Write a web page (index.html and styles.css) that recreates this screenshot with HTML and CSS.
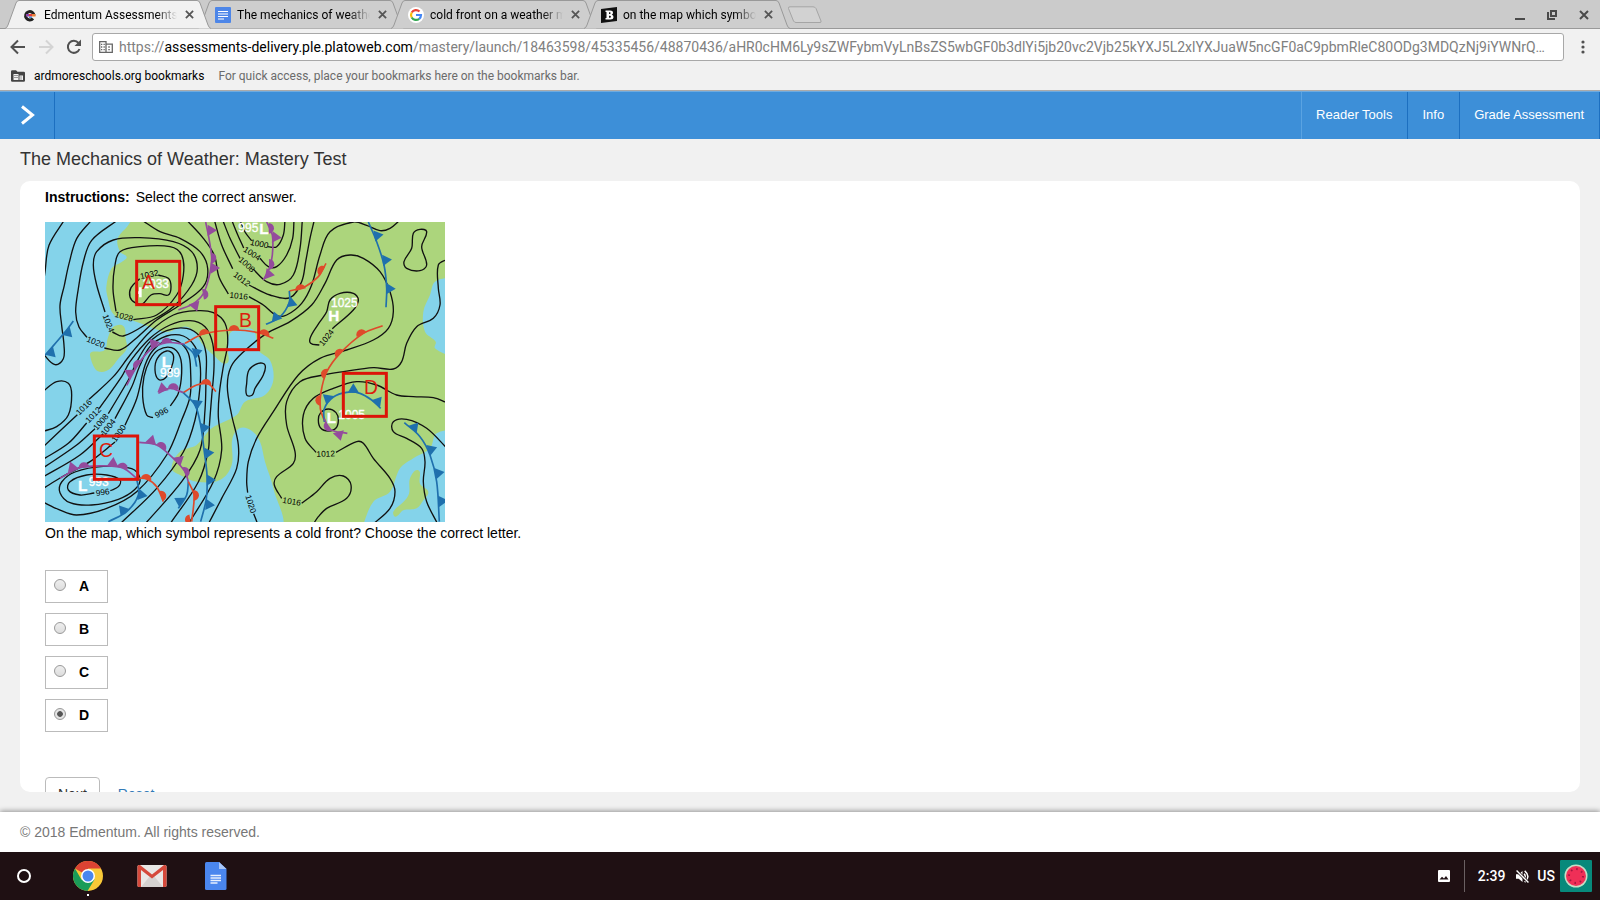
FILE: index.html
```html
<!DOCTYPE html>
<html lang="en">
<head>
  <meta charset="UTF-8" />
  <meta name="viewport" content="width=device-width, initial-scale=1.0"/>
  <title>Edmentum Assessments</title>
  <link rel="stylesheet" href="styles.css">
</head>
<body>
  <!-- Tab strip -->
  <div class="tab-strip">
    <div class="tab active">
      <svg class="tab-shape" viewBox="0 0 206 29"><path d="M0 28.5Q2 28 3 25L11 3Q12 .5 14 .5H192Q194 .5 195 3L203 25Q204 28 206 28.5"/></svg>
      <svg class="favicon" viewBox="0 0 16 16"><path d="M12 8.500A4.200 4.200 0 1 0 11 11.500" fill="none" stroke="#222" stroke-width="3"/><path d="M4 7h3v2.500H4z" fill="#8e44ad"/><path d="M7 7h3v2.500H7z" fill="#e23b3b"/><path d="M10 7h3.500v2.500H10z" fill="#e9803a"/><path d="M7 9.500h3v1.500H7z" fill="#4a90d9"/></svg>
      <span class="tab-title">Edmentum Assessments</span>
      <button class="tab-close" aria-label="Close tab"><svg viewBox="0 0 10 10"><path d="M1 1l8 8M9 1l-8 8"/></svg></button>
    </div>
    <div class="tab">
      <svg class="tab-shape" viewBox="0 0 206 29"><path d="M0 28.5Q2 28 3 25L11 3Q12 .5 14 .5H192Q194 .5 195 3L203 25Q204 28 206 28.5"/></svg>
      <svg class="favicon" viewBox="0 0 16 16"><rect width="16" height="16" rx="1" fill="#4d86e8"/><path d="M3 4.500h10M3 7h10M3 9.500h10M3 12h6" stroke="#fff" stroke-width="1.200"/></svg>
      <span class="tab-title">The mechanics of weather</span>
      <button class="tab-close" aria-label="Close tab"><svg viewBox="0 0 10 10"><path d="M1 1l8 8M9 1l-8 8"/></svg></button>
    </div>
    <div class="tab">
      <svg class="tab-shape" viewBox="0 0 206 29"><path d="M0 28.5Q2 28 3 25L11 3Q12 .5 14 .5H192Q194 .5 195 3L203 25Q204 28 206 28.5"/></svg>
      <svg class="favicon" viewBox="0 0 16 16"><circle cx="8" cy="8" r="8" fill="#fff"/><g fill="none" stroke-width="2.200"><path d="M11.500 4.500A5 5 0 0 0 3.700 5.500" stroke="#ea4335"/><path d="M3.700 5.500A5 5 0 0 0 3.700 10.500" stroke="#fbbc05"/><path d="M3.700 10.500A5 5 0 0 0 11.200 11.800" stroke="#34a853"/><path d="M11.200 11.800A5 5 0 0 0 13 8H8" stroke="#4285f4"/></g></svg>
      <span class="tab-title">cold front on a weather map</span>
      <button class="tab-close" aria-label="Close tab"><svg viewBox="0 0 10 10"><path d="M1 1l8 8M9 1l-8 8"/></svg></button>
    </div>
    <div class="tab">
      <svg class="tab-shape" viewBox="0 0 206 29"><path d="M0 28.5Q2 28 3 25L11 3Q12 .5 14 .5H192Q194 .5 195 3L203 25Q204 28 206 28.5"/></svg>
      <svg class="favicon" viewBox="0 0 16 16"><path d="M0 2L16 0V14L0 16Z" fill="#111"/><path d="M4.500 3.500h4.500q3 0 3 2.300 0 1.500-1.300 2 1.800.4 1.800 2.200 0 2.500-3.200 2.500H4.500v-1.500h1V5h-1zM8 5.200v1.800h.8q.8 0 .8-.9t-.8-.9zM8 8.800v2h1q.9 0 .9-1t-.9-1z" fill="#fff" fill-rule="evenodd"/></svg>
      <span class="tab-title">on the map which symbol</span>
      <button class="tab-close" aria-label="Close tab"><svg viewBox="0 0 10 10"><path d="M1 1l8 8M9 1l-8 8"/></svg></button>
    </div>
    <button class="new-tab" aria-label="New tab"><svg viewBox="0 0 36 18"><path d="M1.500 2.500Q1 .8 3 .8H26Q28 .8 29 2.500L34 15Q34.500 16.500 33 16.500H9Q7.500 16.500 6.500 15Z"/></svg></button>
    <div class="window-buttons">
      <button aria-label="Minimize"><svg viewBox="0 0 12 12"><path d="M1 10h10"/></svg></button>
      <button aria-label="Restore"><svg viewBox="0 0 12 12"><path d="M5 2h5v5H5zM2 3v7h7"/></svg></button>
      <button aria-label="Close"><svg viewBox="0 0 12 12"><path d="M2 2l8 8M10 2l-8 8"/></svg></button>
    </div>
  </div>

  <!-- Toolbar -->
  <div class="toolbar">
    <button class="nav-button" aria-label="Back"><svg viewBox="0 0 16 16"><path d="M15 8H2M8 1.500L1.500 8L8 14.500"/></svg></button>
    <button class="nav-button disabled" aria-label="Forward"><svg viewBox="0 0 16 16"><path d="M1 8H14M8 1.500L14.500 8L8 14.500"/></svg></button>
    <button class="nav-button" aria-label="Reload"><svg viewBox="0 0 16 16"><path d="M13.500 10A6 6 0 1 1 12.500 4"/><path d="M15 .5V7H8.500Z" class="solid"/></svg></button>
    <label class="omnibox">
      <svg viewBox="0 0 14 12"><path d="M.7.7h6.300v10.600H.7zM7 3.200h6.300v8.100H7M2 3.300h1.300M4.500 3.300h1.300M2 6h1.300M4.500 6h1.300M2 8.700h1.300M4.500 8.700h1.300M9.300 6h1.500M9.300 8.700h1.500"/></svg>
      <span>https://</span><b>assessments-delivery.ple.platoweb.com</b>
      <input type="text" aria-label="Address" value="/mastery/launch/18463598/45335456/48870436/aHR0cHM6Ly9sZWFybmVyLnBsZS5wbGF0b3dlYi5jb20vc2Vjb25kYXJ5L2xlYXJuaW5ncGF0aC9pbmRleC80ODg3MDQzNj9iYWNrQ…" />
    </label>
    <button class="menu-button" aria-label="Menu"><svg viewBox="0 0 4 14"><circle cx="2" cy="2" r="1.600"/><circle cx="2" cy="7" r="1.600"/><circle cx="2" cy="12" r="1.600"/></svg></button>
  </div>

  <div class="bookmarks">
    <svg viewBox="0 0 14 12"><path d="M0 1.500Q0 .3 1.200.3H5L6.500 1.800H12.800Q14 1.800 14 3V10.500Q14 11.700 12.800 11.700H1.200Q0 11.700 0 10.500Z" fill="#444"/><path d="M2.500 4h5v6h-5zM8.500 5.500h3.500v4.500H8.500z" fill="#f1f1f1"/><path d="M4 5v4M6 5v4M10 6.500v3" stroke="#444" stroke-dasharray="1 1"/></svg>
    <a href="#">ardmoreschools.org bookmarks</a>
    <span>For quick access, place your bookmarks here on the bookmarks bar.</span>
  </div>

  <!-- Assessment header -->
  <header class="app-bar">
    <button class="expand" aria-label="Open menu"><svg viewBox="0 0 14 20"><path d="M1 1.500L11.500 10L1 18.500"/></svg></button>
    <nav>
      <a href="#">Reader Tools</a>
      <a href="#">Info</a>
      <a href="#">Grade Assessment</a>
    </nav>
  </header>

  <main>
    <h1>The Mechanics of Weather: Mastery Test</h1>
    <form class="card">
      <p class="instructions"><b>Instructions:</b> Select the correct answer.</p>
      <svg class="map" viewBox="0 0 1200 900" role="img" aria-label="Weather map">
        <rect width="1200" height="900" fill="#acd57c"/>
        <g id="water" fill="#84d3ea"></g>
        <g id="islands" fill="#acd57c"></g>
        <g id="isobars" fill="none" stroke="#111" stroke-width="4"></g>
        <g id="fronts"></g>
        <g id="pressures" class="pressures"></g>
        <g class="centers">
          <text x="580" y="29">995</text><text x="643" y="37" class="mark">L</text>
          <text x="292" y="198">1033</text><path d="M286 196V226M274 212H286" stroke="#fff" stroke-width="8"/>
          <text x="858" y="254">1025</text><text x="850" y="297" class="mark">H</text>
          <text x="350" y="434" class="mark">L</text><text x="345" y="465">989</text>
          <text x="99" y="807" class="mark">L</text><text x="131" y="792">993</text>
          <text x="845" y="604" class="mark">L</text><text x="880" y="592">1005</text>
        </g>
        <g class="choices-on-map">
          <rect x="275" y="118" width="129" height="130"/><text x="291" y="201">A</text>
          <rect x="512" y="254" width="129" height="129"/><text x="582" y="314">B</text>
          <rect x="148" y="642" width="130" height="130"/><text x="162" y="704">C</text>
          <rect x="895" y="454" width="129" height="129"/><text x="957" y="515">D</text>
        </g>
      </svg>
      <p class="question">On the map, which symbol represents a cold front? Choose the correct letter.</p>
      <div class="options">
        <label><input type="radio" name="answer" value="A" /> A</label>
        <label><input type="radio" name="answer" value="B" /> B</label>
        <label><input type="radio" name="answer" value="C" /> C</label>
        <label><input type="radio" name="answer" value="D" checked /> D</label>
      </div>
      <div class="actions">
        <button type="button">Next</button>
        <a href="#">Reset</a>
      </div>
    </form>
  </main>

  <footer>© 2018 Edmentum. All rights reserved.</footer>

  <!-- Shelf -->
  <div class="shelf">
    <button class="launcher" aria-label="Launcher"></button>
    <button class="app running" aria-label="Chrome"><svg viewBox="0 0 30 30"><circle cx="15" cy="15" r="15" fill="#f9c938"/><path d="M15 15L2 7.500A15 15 0 0 1 28 7.500H15Z" fill="#dc4333"/><path d="M2 7.500A15 15 0 0 0 14.500 30L21.500 18.500L15 15L8.500 18.800Z" fill="#1a9c58"/><circle cx="15" cy="15" r="7" fill="#fff"/><circle cx="15" cy="15" r="5.500" fill="#4a86ee"/></svg></button>
    <button class="app" aria-label="Gmail"><svg viewBox="0 0 30 30"><rect x="0.500" y="4" width="29" height="22" rx="1.500" fill="#e9e7e5"/><path d="M4 26L13 15L15 17L17 15L26 26Z" fill="#d5d2d0"/><path d="M0.500 5.500Q.5 4 2 4H3L15 13.500L27 4H28Q29.500 4 29.500 5.500V24.500Q29.500 26 28 26H26V9L15 17.500L4 9V26H2Q.5 26 .5 24.500Z" fill="#d5493b"/></svg></button>
    <button class="app" aria-label="Docs"><svg viewBox="0 0 30 30"><path d="M4 2.500Q4 1 5.500 1H18L25.500 8V27.500Q25.500 29 24 29H5.500Q4 29 4 27.500Z" fill="#4a86ee"/><path d="M18 1L25.500 8H18Z" fill="#a9c6f8"/><path d="M9.500 14.500h10.500M9.500 17h10.500M9.500 19.500h10.500M9.500 22h7" stroke="#e8f0fe" stroke-width="1.300"/></svg></button>
    <div class="tray">
      <svg class="picture" viewBox="0 0 12 12"><path d="M1 0H11Q12 0 12 1V11Q12 12 11 12H1Q0 12 0 11V1Q0 0 1 0ZM1.500 9.500H10.500L8 6L6 8.500L4 6.800Z" fill="#fff" fill-rule="evenodd"/></svg>
      <span class="divider"></span>
      <span>2:39</span>
      <svg class="muted" viewBox="0 0 12 12"><path d="M0 4H2.500L6 1V11L2.500 8H0Z" fill="#fff"/><path d="M7.500 3.500Q9.500 6 7.500 8.500M8 .8Q14 6 8 11.200" fill="none" stroke="#fff" stroke-width="1.400"/><path d="M.5.5L11.500 11.500" stroke="#1f1013" stroke-width="2.600"/><path d="M.5.5L11.500 11.500" stroke="#fff" stroke-width="1.300"/></svg>
      <span>US</span>
      <svg class="avatar" viewBox="0 0 32 32"><rect width="32" height="32" rx="1" fill="#07897b"/><circle cx="16" cy="16" r="11.500" fill="#c4dfc6"/><circle cx="16" cy="16" r="10" fill="#ef2f57"/><circle cx="16" cy="16" r="7" fill="none" stroke="#a01840" stroke-width="2" stroke-dasharray="1.500 4"/></svg>
    </div>
  </div>
  <script src="map.js"></script>
</body>
</html>
```

FILE: styles.css
```css
:root {
  --chrome: #f1f1f1;
  --blue: #3d8fd8;
  --line: #bbb;
}

* {
  box-sizing: border-box;
}

body {
  margin: 0;
  height: 100vh;
  display: flex;
  flex-direction: column;
  overflow: hidden;
  background: #f1f1f1;
  color: #000;
  font-family: "Liberation Sans", Arial, sans-serif;
  font-size: 14px;
}

button {
  padding: 0;
  border: none;
  background: none;
  font: inherit;
}

svg {
  display: block;
  flex: none;
}

p, h1 {
  margin: 0;
}

/* tab strip */
.tab-strip {
  display: flex;
  align-items: center;
  height: 29px;
  padding-left: 5px;
  background: #cbcbcb;
  box-shadow: inset 0 -1px #999;
  font-family: Roboto, sans-serif;
  font-size: 12px;
}

.tab {
  position: relative;
  display: flex;
  align-items: center;
  width: 206px;
  height: 29px;
  margin-right: -13px;
  padding: 0 17px 0 17px;
}

.tab.active {
  z-index: 1;
}

.tab-shape {
  position: absolute;
  inset: 0;
  fill: #cecece;
  stroke: #999;
}

.tab.active .tab-shape {
  fill: var(--chrome);
}

.favicon {
  position: relative;
  width: 16px;
  height: 16px;
}

.tab-title {
  position: relative;
  flex: 1;
  margin: 0 8px 0 6px;
  overflow: hidden;
  white-space: nowrap;
  mask-image: linear-gradient(to right, #000 84%, transparent);
}

.tab-close svg {
  position: relative;
  width: 9px;
  height: 9px;
  stroke: #555;
  stroke-width: 2;
}

.new-tab {
  margin-left: 10px;
}

.new-tab svg {
  width: 36px;
  height: 18px;
  fill: #d2d2d2;
  stroke: #a5a5a5;
}

.window-buttons {
  display: flex;
  gap: 20px;
  margin-left: auto;
  padding-right: 10px;
}

.window-buttons svg {
  width: 12px;
  height: 12px;
  fill: none;
  stroke: #4a4a4a;
  stroke-width: 2;
}

/* toolbar */
.toolbar {
  display: flex;
  align-items: center;
  height: 36px;
  padding: 0 15px 0 10px;
  background: var(--chrome);
  font-family: Roboto, sans-serif;
  font-size: 14px;
}

.nav-button {
  margin-right: 12px;
}

.nav-button svg {
  width: 16px;
  height: 16px;
  fill: none;
  stroke: #505050;
  stroke-width: 2;
}

.nav-button .solid {
  fill: #505050;
  stroke: none;
}

.nav-button.disabled svg {
  stroke: #d4d4d4;
}

.omnibox {
  flex: 1;
  display: flex;
  align-items: center;
  height: 28px;
  margin-left: -2px;
  padding: 0 6px;
  border: 1px solid #a8a8a8;
  border-radius: 3px;
  background: #fff;
  color: #808080;
}

.omnibox svg {
  width: 14px;
  height: 12px;
  margin-right: 6px;
  fill: none;
  stroke: #666;
  stroke-width: 1.3;
}

.omnibox b {
  color: #000;
  font-weight: normal;
}

.omnibox input {
  flex: 1;
  min-width: 0;
  padding: 0;
  border: none;
  outline: none;
  background: none;
  color: inherit;
  font: inherit;
}

.menu-button {
  margin-left: 17px;
}

.menu-button svg {
  width: 4px;
  height: 14px;
  fill: #505050;
}

.bookmarks {
  display: flex;
  align-items: center;
  height: 26px;
  padding: 0 11px 4px;
  background: var(--chrome);
  border-bottom: 1px solid #aaa;
  color: #6b6b6b;
  font-family: Roboto, sans-serif;
  font-size: 12px;
}

.bookmarks svg {
  width: 14px;
  height: 12px;
}

.bookmarks a {
  margin: 0 14px 0 9px;
  color: #000;
  text-decoration: none;
}

/* assessment header */
.app-bar {
  display: flex;
  justify-content: space-between;
  height: 48px;
  background: var(--blue);
  border-top: 1px solid #6eabe0;
}

.expand {
  width: 55px;
  padding: 0 0 2px 2px;
  border-right: 1px solid #1c6fc0;
}

.expand svg {
  width: 14px;
  height: 20px;
  margin: 0 auto;
  fill: none;
  stroke: #fff;
  stroke-width: 3;
}

.app-bar nav {
  display: flex;
  border-left: 1px solid #5aa3e2;
}

.app-bar a {
  display: flex;
  align-items: center;
  padding: 0 15px 2px 14px;
  border-right: 1px solid #1c6fc0;
  color: #fff;
  font-size: 13px;
  text-decoration: none;
}

/* content */
main {
  flex: 1;
  min-height: 0;
  display: flex;
  flex-direction: column;
  padding: 0 20px 20px;
}

h1 {
  padding: 10px 0 11px;
  color: #333;
  font-size: 18px;
  font-weight: normal;
  line-height: 21px;
}

.card {
  flex: 1;
  min-height: 0;
  overflow: hidden;
  padding: 7px 25px 0;
  border-radius: 10px;
  background: #fff;
}

.instructions {
  margin-bottom: 16px;
  line-height: 18px;
}

.instructions b {
  margin-right: 2px;
}

.map {
  width: 400px;
  height: 300px;
}

.question {
  margin: 2px 0 28px;
  line-height: 18px;
}

.options {
  display: flex;
  flex-direction: column;
  align-items: flex-start;
  gap: 10px;
}

.options label {
  display: flex;
  align-items: center;
  gap: 13px;
  width: 63px;
  height: 33px;
  padding: 0 0 2px 8px;
  border: 1px solid var(--line);
  font-weight: bold;
}

.options input {
  appearance: none;
  width: 12px;
  height: 12px;
  margin: 0 0 2px;
  border: 1px solid #999;
  border-radius: 50%;
  background: linear-gradient(#eee, #ddd);
}

.options input:checked {
  background: radial-gradient(circle, #555 35%, #e4e4e4 45%);
}

.actions {
  display: flex;
  align-items: center;
  gap: 18px;
  margin-top: 45px;
}

.actions button {
  height: 34px;
  padding: 0 12px;
  border: 1px solid var(--line);
  border-radius: 4px;
  color: #333;
}

.actions a {
  color: #337ab7;
  text-decoration: none;
}

footer {
  height: 40px;
  padding-left: 20px;
  background: #fff;
  box-shadow: 0 -1px 5px rgba(0, 0, 0, 0.4);
  color: #777;
  font-size: 14px;
  line-height: 41px;
}

/* weather map */
.pressures {
  font-size: 25px;
  text-anchor: middle;
}

.centers {
  fill: #fff;
  stroke: #fff;
  font-size: 36px;
}

.centers .mark {
  font-size: 46px;
  font-weight: bold;
}

.choices-on-map {
  fill: #dc1e0e;
  font-size: 58px;
}

.choices-on-map rect {
  fill: none;
  stroke: #dc1408;
  stroke-width: 9;
}

/* shelf */
.shelf {
  display: flex;
  align-items: center;
  height: 48px;
  padding: 0 8px 0 17px;
  background: #1f1013;
  color: #fff;
  font-family: Roboto, sans-serif;
  font-size: 14px;
  font-weight: 500;
}

.launcher {
  width: 14px;
  height: 14px;
  margin-right: 42px;
  border: 2px solid #fff;
  border-radius: 50%;
}

.app {
  position: relative;
  margin-right: 34px;
}

.app svg {
  width: 30px;
  height: 30px;
}

.app.running::after {
  content: "";
  position: absolute;
  bottom: -5px;
  left: 14px;
  width: 2px;
  height: 2px;
  background: #fff;
}

.tray {
  display: flex;
  align-items: center;
  margin-left: auto;
}

.picture {
  width: 12px;
  height: 12px;
}

.divider {
  width: 1px;
  height: 32px;
  margin: 0 13px 0 14px;
  background: #6a6062;
}

.muted {
  width: 13px;
  height: 13px;
  margin: 0 8px 0 11px;
}

.avatar {
  width: 32px;
  height: 32px;
  margin-left: 5px;
}
```

FILE: map.js
```js
const PURPLE = "#944b9c", RED = "#df4a2b", BLUE = "#1f70ad";

// point lists are "x,y x,y ..." in the 1200x900 map space
const water = [
  "-20,-20 262,-20 250,9 218,50 225,89 245,105 230,120 200,139 184,195 190,235 200,269 225,290 265,296 315,315 365,330 400,318 425,314 450,330 470,364 505,399 545,424 548,380 555,334 585,322 625,324 640,384 675,415 685,474 660,519 600,539 575,579 500,619 455,669 405,689 380,739 405,759 455,779 525,774 560,729 562,650 585,618 620,626 645,659 660,719 685,799 700,920 -20,920",
  "1220,165 1170,179 1155,219 1135,269 1140,329 1172,359 1170,379 1220,405",
  "950,920 985,839 1035,809 1065,739 1105,709 1155,679 1175,634 1220,634 1220,920"
];

const islands = [
  "205,315 235,312 242,350 245,380 220,410 195,440 170,450 150,440 135,400 140,390 178,385 188,350 205,315",
  "1045,869 1075,840 1092,815 1095,769 1120,745 1125,785 1150,809 1135,835 1115,859 1075,865 1052,884 1045,869"
];

const isobars = [
  "58,-6 12,70 0,150 -6,190",
  "140,-6 95,50 72,125 58,190 45,250 50,310 57,370 55,410 30,428 -6,395",
  "218,-6 140,55 115,120 100,200 92,270 102,315 126,346",
  "178,378 225,384 270,352 335,294 405,249 475,194 488,139 465,89 405,49 345,29 290,-6",
  "180,270 155,189 145,129 155,89 205,54 285,47 385,59 440,89 457,139 440,189 385,254 315,299 235,342 202,330",
  "213,268 204,200 210,129 225,89 285,74 375,74 410,99 415,159 395,219 335,279 265,293",
  "284,170 258,197 255,225 270,242 292,246 318,219 345,215 370,219 378,194 370,169 340,159",
  "425,-6 475,49 508,100 522,165 550,216",
  "508,-6 530,69 563,140", "533,-6 555,49 585,109", "560,-6 578,38 596,78", "585,-6 600,30 620,56",
  "668,74 695,74 715,39 720,-6",
  "645,109 670,134 695,134 725,99 743,49 747,-6",
  "625,142 665,179 705,187 745,159 765,79 772,-6",
  "612,189 675,219 735,227 770,179 782,119 795,49 808,-6",
  "612,224 655,249 695,281 725,279 770,244 800,189 825,99 855,29 925,0 965,10 1005,26 1035,19 1065,-6",
  "490,906 530,829 575,739 580,669 560,579 547,494 558,434 595,390 665,334 735,299 800,249 840,184 875,114 915,99 955,109 1005,149 1035,209 1045,269 1030,319 985,354 905,384 825,409 760,459 685,569 635,649 610,719 605,779 608,812",
  "626,875 638,906",
  "1125,22 1145,29 1130,74 1145,129 1125,146 1085,139 1077,119 1100,79 1105,34 1125,22",
  "862,320 925,264 940,234 925,214 885,214 855,234 845,269 825,299 797,344 797,364 823,369",
  "1206,112 1180,129 1180,199 1185,249 1165,289 1115,314 1085,364 1070,419 1045,441 985,437 895,449 835,459 765,479 725,539 725,609 750,689 745,724 695,764 688,789 710,829",
  "770,844 815,809 855,769 895,762 918,789 905,829 845,859 820,884 805,906",
  "1206,542 1165,527 1105,524 1055,519 995,489 935,479 865,499 805,529 775,579 780,649 813,691",
  "873,691 935,659 955,664 985,709 1035,769 1050,809 1035,859 985,906",
  "850,561 873,572 880,594 873,618 850,627 827,618 820,594 827,572 850,561",
  "1206,679 1145,619 1085,592 1045,599 1045,629 1085,649 1130,679 1140,719 1135,779 1145,839 1178,906",
  "640,424 660,429 655,459 630,499 622,519 605,519 605,484 612,444 640,424",
  "365,387 385,399 380,434 360,469 340,472 330,444 337,409 365,387",
  "376,552 400,514 410,454 405,404 380,377 340,384 315,414 297,464 293,524 305,579 324,587",
  // ridge over the 989 low, 1016 down to 1000
  "132,532 205,464 255,399 315,329 385,279 455,266 505,272 540,304 548,364 535,434 523,514 520,584 530,684 505,779 430,906",
  "162,560 230,464 255,419 315,349 375,309 435,296 480,314 503,364 507,434 500,524 493,614 490,684 460,780 375,906",
  "190,575 255,465 270,430 310,364 365,326 425,319 465,344 483,394 483,464 480,564 465,684 410,779 300,906",
  "210,590 260,495 285,430 315,374 365,342 415,342 450,374 465,424 465,494 450,594 415,690 335,799 225,906",
  "240,610 275,530 300,430 325,384 365,355 400,359 430,394 437,454 435,524 410,594 365,699 275,809 185,859 95,879 40,862 -6,840",
  "97,578 -6,675", "125,603 70,664 -6,712", "150,620 95,669 -6,738", "175,635 105,699 -6,765", "210,660 135,719 50,765 -6,800",
  "-6,508 35,479 70,484 80,519 70,579 35,614 -6,628",
  "148,813 105,819 70,804 75,779 125,759 185,759 225,774 220,794 196,806",
  "175,733 90,750 50,780 45,812 75,842 140,849 220,832 270,802 285,769 260,740 175,733"
];

const pressures = [
  ["1020", 152, 361, 22], ["1024", 190, 304, 68], ["1028", 237, 284, 15], ["1032", 313, 158, -12],
  ["1016", 581, 222, 6], ["1012", 590, 172, 38], ["1008", 605, 128, 42], ["1004", 621, 95, 32], ["1000", 643, 66, 12],
  ["1024", 845, 347, -52], ["996", 350, 572, -28], ["1012", 842, 696, -2], ["1016", 740, 839, 10], ["1020", 617, 846, 72],
  ["1016", 117, 556, -45], ["1012", 145, 579, -45], ["1008", 168, 600, -50], ["1004", 190, 616, -52], ["1000", 222, 634, -55],
  ["996", 173, 811, -8]
];

// marks: t = triangle, s = semicircle, then x, y and the side they point to
const fronts = [
  [PURPLE, "482,0 492,50 500,110 492,165 475,215 445,245 400,264", "t488,25,0 s498,108,0 t497,138,0 s474,217,-10 t447,242,70"],
  [PURPLE, "665,0 682,39 682,99 673,139 655,174", "s671,19,0 t682,45,5 s672,127,0 t662,155,10"],
  [RED, "733,207 780,194 820,164 843,124", "s767,203,-105 s833,147,-150"],
  [BLUE, "733,207 733,241 705,285 663,307", "t731,240,20 t696,295,-110"],
  [BLUE, "970,0 995,59 1017,129 1025,199 1023,256", "t988,42,-10 t1013,115,-5 t1024,200,0"],
  [RED, "1013,311 955,334 885,394 845,450 828,510 826,560 840,600", "s950,338,-115 s885,396,-135 s844,456,-160 s827,535,180"],
  [BLUE, "838,600 838,560 865,525 905,511 945,514 980,534 1007,559", "t855,535,-140 t925,512,-90 t992,546,-50"],
  [PURPLE, "838,590 855,622 907,634", "s852,612,145 t880,629,75"],
  [BLUE, "1078,602 1125,644 1155,699 1175,779 1183,899", "t1102,623,-50 t1150,685,-20 t1171,755,-10 t1181,838,-5"],
  [RED, "420,364 475,336 565,324 640,332 685,349", "s478,337,-105 s567,325,-90 s657,338,-70"],
  [PURPLE, "245,490 275,434 315,384 365,362 420,367", "s365,363,-90 t332,372,-130 s280,430,-140 t262,458,-150"],
  [BLUE, "415,367 445,394 455,434", "t446,394,-20"],
  [PURPLE, "340,514 375,499 415,512", "t354,508,-100 s385,500,-85"],
  [RED, "415,512 455,489 490,486 513,509", "s483,487,-80"],
  [BLUE, "415,512 450,549 467,610 478,690 486,760 484,830 467,899", "t448,549,-25 t468,619,-10 t480,694,-5 t485,774,0 t482,847,5"],
  [PURPLE, "283,661 335,669 385,709 420,749 430,779", "t317,665,-75 s348,676,-55 t395,720,-40 s418,751,-20"],
  [BLUE, "430,779 425,819 400,859", "t412,842,-150"],
  [RED, "430,779 447,819 440,899", "s446,820,0 s436,893,170"],
  [PURPLE, "45,769 105,737 185,732 235,739 275,769", "t85,745,-110 s117,737,-95 t203,733,-85 s232,738,-75"],
  [RED, "275,769 305,771 335,794 355,839", "s303,772,-70 s348,822,-20"],
  [BLUE, "275,769 280,819 245,869 190,899", "t280,817,10 t240,872,-130"],
  [BLUE, "85,297 62,328 0,400", "t62,326,45 t12,386,45"]
];

const SHAPES = { t: "M0 -17L28 0L0 17Z", s: "M0 -16A16 16 0 0 1 0 16Z" };

// smooth curve through all the points, closed when it ends where it began
function curve(list) {
  const p = list.split(" ").map(s => s.split(",").map(Number));
  const n = p.length;
  const closed = String(p[0]) === String(p[n - 1]);
  const before = i => p[i - 1] || (closed ? p[n - 2] : p[0]);
  const after = i => p[i + 1] || (closed ? p[1] : p[n - 1]);
  const handle = (i, length) => {
    const a = before(i), b = after(i);
    const k = length / 3 / (Math.hypot(b[0] - a[0], b[1] - a[1]) || 1);
    return [(b[0] - a[0]) * k, (b[1] - a[1]) * k];
  };
  let d = "M" + p[0];
  for (let i = 0; i < n - 1; i++) {
    const b = p[i], c = p[i + 1];
    const length = Math.hypot(c[0] - b[0], c[1] - b[1]);
    const h1 = handle(i, length), h2 = handle(i + 1, length);
    d += `C${b[0] + h1[0]},${b[1] + h1[1]} ${c[0] - h2[0]},${c[1] - h2[1]} ${c}`;
  }
  return d;
}

function fill(id, html) {
  document.getElementById(id).innerHTML = html;
}

fill("water", water.map(w => `<path d="${curve(w)}Z"/>`).join(""));
fill("islands", islands.map(w => `<path d="${curve(w)}Z"/>`).join(""));
fill("isobars", isobars.map(w => `<path d="${curve(w)}"/>`).join(""));
fill("pressures", pressures.map(([t, x, y, r]) => `<text transform="translate(${x} ${y}) rotate(${r})" dy="8">${t}</text>`).join(""));
fill("fronts", fronts.map(([color, line, marks]) => {
  const symbols = marks.split(" ").map(m => {
    const [x, y, r] = m.slice(1).split(",");
    return `<path d="${SHAPES[m[0]]}" fill="${color}" transform="translate(${x} ${y}) rotate(${r})"/>`;
  });
  return `<path d="${curve(line)}" fill="none" stroke="${color}" stroke-width="5"/>` + symbols.join("");
}).join(""));
```
